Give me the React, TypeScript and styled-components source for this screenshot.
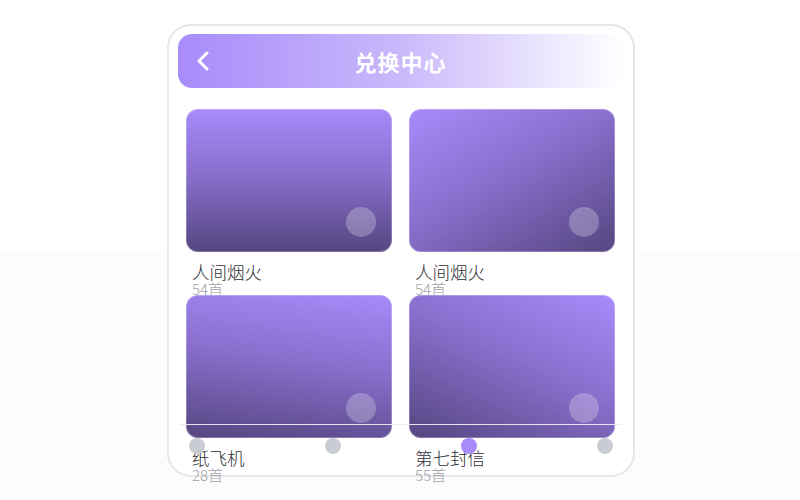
import styled, { createGlobalStyle } from "styled-components";

const GlobalStyle = createGlobalStyle`
  html, body {
    margin: 0;
    padding: 0;
  }
  body {
    min-height: 500px;
    background: linear-gradient(#ffffff 0, #ffffff 250px, #fcfcfd 250px);
    font-family: "Noto Sans CJK SC", "Noto Sans", sans-serif;
  }
`;

const Page = styled.div`
  display: flex;
  justify-content: center;
  padding: 24px 0 0 2px;
`;

const Frame = styled.div`
  position: relative;
  box-sizing: border-box;
  width: 468px;
  height: 453px;
  border: 2px solid #e6e6eb;
  border-radius: 24px;
  background: #fff;
  padding: 8px 8px 0 9px;
`;

const Header = styled.div`
  position: relative;
  height: 54px;
  border-radius: 14px;
  background: linear-gradient(90deg, #a88bfa 0%, #c9b9fb 50%, #ffffff 100%);
  display: flex;
  align-items: center;
  justify-content: center;
`;

const Back = styled.button`
  position: absolute;
  left: 18px;
  top: 17px;
  padding: 0;
  border: none;
  background: none;
  display: flex;
`;

const Title = styled.h1`
  margin: 0 2px 0 0;
  color: #fff;
  font-size: 22px;
  font-weight: 700;
  letter-spacing: 1px;
`;

const Grid = styled.div`
  display: grid;
  grid-template-columns: 206px 206px;
  column-gap: 17px;
  margin: 21px 0 0 8px;
`;

const Card = styled.div`
  display: flex;
  flex-direction: column;
`;

const Cover = styled.div<{ $angle: number }>`
  position: relative;
  height: 143px;
  border-radius: 12px;
  background: linear-gradient(${(p) => p.$angle}deg, #a78bfa 0%, #8a6fce 45%, #554680 100%);
  box-shadow: inset 0 0 0 1px rgba(255, 255, 255, 0.25);
`;

const Badge = styled.span`
  position: absolute;
  right: 16px;
  bottom: 15px;
  width: 30px;
  height: 30px;
  border-radius: 50%;
  background: rgba(255, 255, 255, 0.25);
`;

const Name = styled.div`
  margin: 10px 0 0 6px;
  font-size: 17.5px;
  font-weight: 300;
  line-height: 20px;
  color: #2e2e33;
`;

const Count = styled.div`
  margin-left: 6px;
  font-size: 15px;
  font-weight: 300;
  line-height: 13px;
  height: 13px;
  color: #a0a0a6;
`;

const Track = styled.div`
  position: absolute;
  left: 11px;
  top: 398px;
  width: 442px;
  border-top: 1px solid rgba(236, 236, 242, 0.95);
`;

const Dots = styled.div`
  display: flex;
  justify-content: space-between;
  padding: 0 9px;
  margin-top: 13px;
`;

const Dot = styled.span<{ $active?: boolean }>`
  width: 16px;
  height: 16px;
  border-radius: 50%;
  background: ${(p) => (p.$active ? "#a78bfa" : "#c9ccd2")};
`;

const items = [
  { name: "人间烟火", count: 54, angle: 180 },
  { name: "人间烟火", count: 54, angle: 150 },
  { name: "纸飞机", count: 28, angle: 188 },
  { name: "第七封信", count: 55, angle: 205 },
];

export default function App() {
  return (
    <Page>
      <GlobalStyle />
      <Frame>
        <Header>
          <Back aria-label="返回">
            <svg width="14" height="20" viewBox="0 0 14 20" fill="none">
              <path d="M11 2 L3 10 L11 18" stroke="#fff" strokeWidth="3" strokeLinecap="round" strokeLinejoin="round" />
            </svg>
          </Back>
          <Title>兑换中心</Title>
        </Header>
        <Grid>
          {items.map((it, i) => (
            <Card key={i}>
              <Cover $angle={it.angle}>
                <Badge />
              </Cover>
              <Name>{it.name}</Name>
              <Count>{it.count}首</Count>
            </Card>
          ))}
        </Grid>
        <Track>
          <Dots>
            <Dot />
            <Dot />
            <Dot $active />
            <Dot />
          </Dots>
        </Track>
      </Frame>
    </Page>
  );
}
